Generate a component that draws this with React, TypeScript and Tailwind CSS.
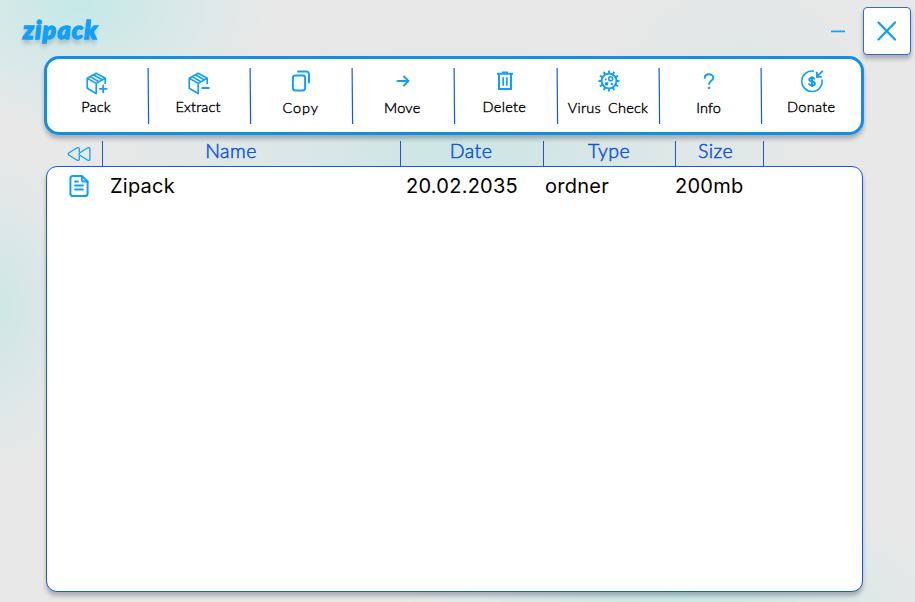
import type { ReactNode } from "react";

const boxBody = (
  <path d="M19.2 12V6.3L10.2 1.2 1.2 6.3V16.2l9 5.3V11.4M1.2 6.3l9 5.1 9-5.1M7.4 2.8l8.8 5M4.2 4.6l8.8 5.1" />
);

function PackIcon() {
  return (
    <svg width="22" height="23" viewBox="0 0 22 23" fill="none" stroke="currentColor" strokeWidth="1.6" strokeLinejoin="round">
      {boxBody}
      <path d="M13.7 16.8h7M17.2 13.3v7" strokeWidth="1.8" strokeLinecap="round" />
    </svg>
  );
}

function ExtractIcon() {
  return (
    <svg width="22" height="23" viewBox="0 0 22 23" fill="none" stroke="currentColor" strokeWidth="1.6" strokeLinejoin="round">
      {boxBody}
      <path d="M14.2 16h6.6" strokeWidth="1.8" strokeLinecap="round" />
    </svg>
  );
}

function CopyIcon() {
  return (
    <svg width="20" height="22" viewBox="0 0 20 22" fill="none" stroke="currentColor" strokeWidth="2" strokeLinecap="round">
      <rect x="1.9" y="5.4" width="12.2" height="15" rx="2.4" />
      <path d="M7 1.6h8.4a2.6 2.6 0 0 1 2.6 2.6v8.2" />
    </svg>
  );
}

function MoveIcon() {
  return (
    <svg width="14" height="12" viewBox="0 0 14 12" fill="none" stroke="currentColor" strokeWidth="1.9" strokeLinecap="round" strokeLinejoin="round">
      <path d="M1.5 6h11M8 1.5 12.5 6 8 10.5" />
    </svg>
  );
}

function TrashIcon() {
  return (
    <svg width="18" height="20" viewBox="0 0 18 20" fill="none" stroke="currentColor" strokeWidth="2">
      <path d="M1 2.7h16M6 1.5h6M3 2.7V18h12V2.7" />
      <path d="M7.2 6.2v8.6M10.8 6.2v8.6" strokeWidth="1.7" />
    </svg>
  );
}

function VirusIcon() {
  const spikes = Array.from({ length: 12 }, (_, i) => i * 30);
  return (
    <svg width="22" height="22" viewBox="0 0 22 22" fill="none" stroke="currentColor" strokeWidth="1.9">
      <circle cx="11" cy="11" r="7.4" />
      {spikes.map((a) => (
        <path key={a} d="M11 3.8V.4" transform={`rotate(${a} 11 11)`} />
      ))}
      <circle cx="12.7" cy="8.8" r="2" strokeWidth="1.6" />
      <circle cx="8.6" cy="13.8" r="1.9" fill="currentColor" stroke="none" />
      <circle cx="13.9" cy="14" r="1.2" fill="currentColor" stroke="none" />
      <circle cx="7.8" cy="9.6" r="1" fill="currentColor" stroke="none" />
    </svg>
  );
}

function QuestionIcon() {
  return (
    <svg width="12" height="17" viewBox="0 0 12 17" fill="none" stroke="currentColor" strokeWidth="1.9" strokeLinecap="round">
      <path d="M1.7 4.8C1.9 2.6 3.7 1.3 6 1.3s4.3 1.4 4.3 3.5c0 3-4.2 3-4.2 6.2" />
      <circle cx="6.1" cy="14.9" r="1.2" fill="currentColor" stroke="none" />
    </svg>
  );
}

function DonateIcon() {
  return (
    <svg width="24" height="23" viewBox="0 0 24 23" fill="none" stroke="currentColor" strokeWidth="1.6">
      <path d="M14 1.3A10.2 10.2 0 1 0 22 9.5" />
      <path d="m22.8.8-6 5.9M16.8 1.8v5h5" strokeWidth="1.8" />
      <path d="M14.6 9.4c-.3-1.1-1.2-1.6-2.6-1.6-1.6 0-2.7.7-2.7 1.9 0 2.7 5.6 1 5.6 3.7 0 1.2-1.2 2-2.9 2s-2.8-.7-3.1-2M12 6.3v10.6" strokeWidth="1.9" />
    </svg>
  );
}

type Tool = {
  label: string;
  icon: ReactNode;
  iconClass: string;
  labelClass: string;
};

const tools: Tool[] = [
  { label: "Pack", icon: <PackIcon />, iconClass: "pt-[13px] pl-[1px]", labelClass: "mt-[2px] tracking-[0.2px]" },
  { label: "Extract", icon: <ExtractIcon />, iconClass: "pt-[13px] pl-[1px]", labelClass: "mt-[2px] tracking-[0.2px]" },
  { label: "Copy", icon: <CopyIcon />, iconClass: "pt-[11px] pl-[2px]", labelClass: "mt-[3px] pl-[1px] tracking-[0.9px]" },
  { label: "Move", icon: <MoveIcon />, iconClass: "pt-[16px] pl-[1px]", labelClass: "mt-[3px] tracking-[0.3px]" },
  { label: "Delete", icon: <TrashIcon />, iconClass: "pt-[12px] pl-[2px]", labelClass: "mt-[2px] tracking-[0.3px]" },
  { label: "Virus Check", icon: <VirusIcon />, iconClass: "pt-[11px] pl-[5px]", labelClass: "mt-[3px] pl-[3px] tracking-[0.2px] [word-spacing:3px]" },
  { label: "Info", icon: <QuestionIcon />, iconClass: "pt-[14px] pl-[1px]", labelClass: "mt-[3px] tracking-[0.1px]" },
  { label: "Donate", icon: <DonateIcon />, iconClass: "pt-[11px] pl-[2px]", labelClass: "mt-[2px] pl-[1px] tracking-[0.3px]" },
];

function Toolbar() {
  return (
    <nav className="ml-[44px] flex h-[79px] w-[820px] rounded-[15px] border-[3px] border-[#108ee9] bg-white shadow-[0_4px_4px_rgba(0,0,0,0.25)]">
      {tools.map((tool, i) => (
        <div key={tool.label} className="flex w-[102.1px] shrink-0">
          <button className="flex w-[98px] shrink-0 flex-col items-center font-['Lato','Open_Sans',sans-serif] text-[14.5px] leading-[20px] font-light text-black [-webkit-text-stroke:0.4px_#000]">
            <span className={`flex h-[36px] items-start text-[#0fa0f8] ${tool.iconClass}`}>{tool.icon}</span>
            <span className={`whitespace-nowrap ${tool.labelClass}`}>{tool.label}</span>
          </button>
          {i < tools.length - 1 && (
            <svg className="mt-[9px] ml-[2.2px] shrink-0" width="3" height="56" stroke="#0f5be3" strokeWidth="1.2">
              <path d="M1.1 0 1.6 56" />
            </svg>
          )}
        </div>
      ))}
    </nav>
  );
}

const columns = [
  { label: "Name", className: "w-[298px] pr-[41px]" },
  { label: "Date", className: "w-[143px] pr-[2px]" },
  { label: "Type", className: "w-[132px] pr-[1px]" },
  { label: "Size", className: "w-[88px] pr-[8px]" },
];

function ColumnHeader() {
  return (
    <div className="mt-[6px] ml-[46px] flex h-[25px] font-['Lato','Open_Sans',sans-serif] text-[19.5px] leading-[20px] font-light tracking-[0.5px] text-[#0f55e6] [-webkit-text-stroke:0.55px_#0f55e6]">
      <div className="flex w-[56px] pt-[5px] pl-[21px]">
        <svg width="24" height="16" viewBox="0 0 24 16" fill="none" stroke="#0fa0f8" strokeWidth="1.3" strokeLinejoin="round">
          <path d="M12.3 6.3V3.2c0-1.4-1-2-2.1-1.4L2 6.7c-1 .7-1 1.9 0 2.6l8.2 4.9c1.1.6 2.1 0 2.1-1.4V9.7" />
          <path d="M22.9 3.2c0-1.4-1-2-2.1-1.4l-8 4.9c-1 .7-1 1.9 0 2.6l8 4.9c1.1.6 2.1 0 2.1-1.4z" />
        </svg>
      </div>
      {columns.map((c) => (
        <div key={c.label} className={`border-l border-[#1659e0] text-center ${c.className}`}>
          {c.label}
        </div>
      ))}
      <div className="border-l border-[#1659e0]" />
    </div>
  );
}

function FileIcon() {
  return (
    <svg width="20" height="24" viewBox="0 0 20 24" fill="none" stroke="#0fa0f8" strokeWidth="2" strokeLinecap="round" strokeLinejoin="round">
      <path d="M12.8 2H4a2.6 2.6 0 0 0-2.6 2.6v14.8A2.6 2.6 0 0 0 4 22h12a2.6 2.6 0 0 0 2.6-2.6V7.5z" />
      <path d="M12.8 2v3.8c0 1 .7 1.7 1.7 1.7h4M6 7.5h3M6 11.5h8M6 15.5h8" strokeWidth="1.8" />
    </svg>
  );
}

function FileList() {
  return (
    <main className="ml-[46px] h-[426px] w-[817px] rounded-[11px] border border-[#1659e0] bg-white shadow-[0_4px_4px_rgba(0,0,0,0.25)]">
      <div className="flex h-[38px] pt-[6px] font-['Inter',sans-serif] text-[20px] leading-[26px] tracking-[0.25px] text-black">
        <div className="w-[63px] pt-[1px] pl-[22px]"><FileIcon /></div>
        <div className="w-[296px]">Zipack</div>
        <div className="w-[139px]">20.02.2035</div>
        <div className="w-[130px]">ordner</div>
        <div>200mb</div>
      </div>
    </main>
  );
}

export default function App() {
  return (
    <div className="h-[602px] w-[915px] overflow-hidden bg-[#e8e8e8] bg-[radial-gradient(ellipse_190px_125px_at_80px_5px,#c4e9e8_0%,#c4e9e880_45%,#c4e9e800_100%),radial-gradient(ellipse_90px_160px_at_0px_310px,#cee7e6_0%,#cee7e680_50%,#cee7e600_100%),radial-gradient(ellipse_360px_110px_at_460px_150px,#cbe6e4_0%,#cbe6e480_45%,#cbe6e400_100%),radial-gradient(ellipse_130px_70px_at_740px_45px,#dfe7e7_0%,#dfe7e700_100%),radial-gradient(ellipse_280px_120px_at_680px_610px,#c8e8e6_0%,#c8e8e680_50%,#c8e8e600_100%)]">
      <header className="flex h-[56px] items-start">
        <h1 className="mt-[14px] ml-[23px] w-[808px] font-['Lato',sans-serif] text-[25px] leading-[30px] font-black italic tracking-[1.2px] text-[#0fa0f8] [-webkit-text-stroke:1.4px_#0fa0f8] [text-shadow:0_4px_4px_rgba(0,0,0,0.25)]">zipack</h1>
        <button className="mt-[30px] h-[3px] w-[14px] shrink-0">
          <svg className="block" width="14" height="3" stroke="#0fa0f8" strokeWidth="1.7"><path d="M0 1.4h14" /></svg>
        </button>
        <button className="mt-[7px] ml-[18px] flex h-[48px] w-[48px] shrink-0 items-center justify-center rounded-[4px] border-[1.5px] border-[#2d69df] bg-white shadow-[0_4px_4px_rgba(0,0,0,0.25)]">
          <svg width="20" height="20" fill="none" stroke="#0fa0f8" strokeWidth="2.3" strokeLinecap="round"><path d="m1.5 1.5 16.5 17M18 1.5l-16.5 17" /></svg>
        </button>
      </header>
      <Toolbar />
      <ColumnHeader />
      <FileList />
    </div>
  );
}
